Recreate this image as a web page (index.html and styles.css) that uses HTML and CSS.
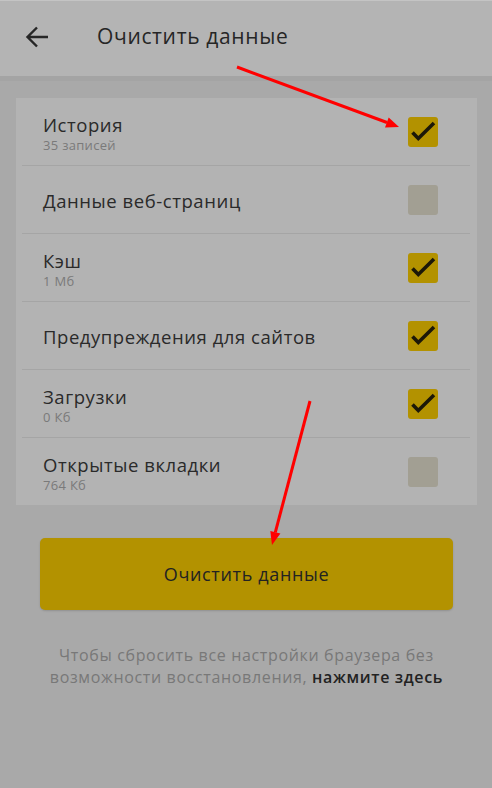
FILE: index.html
```
<!DOCTYPE html>
<html lang="ru">
<head>
<meta charset="utf-8">
<title>Очистить данные</title>
<link rel="stylesheet" href="styles.css">
</head>
<body>
<header class="topbar">
  <svg class="back" width="24" height="22" viewBox="0 0 24 22"><path d="M3 11H23M12 1.5L2.5 11L12 20.5" fill="none" stroke="#262626" stroke-width="2.4" stroke-linecap="butt" stroke-linejoin="miter"/></svg>
  <h1 class="title">Очистить данные</h1>
</header>
<main class="content">
  <section class="card">
    <div class="row">
      <div class="texts"><div class="label">История</div><div class="sub">35 записей</div></div>
      <span class="box on"><svg viewBox="0 0 30 30" width="30" height="30"><path d="M4.5 15.5L10.3 21.5L26 6" fill="none" stroke="#1c1808" stroke-width="3.6"/></svg></span>
    </div>
    <div class="row">
      <div class="texts"><div class="label">Данные веб-страниц</div></div>
      <span class="box"></span>
    </div>
    <div class="row">
      <div class="texts"><div class="label">Кэш</div><div class="sub">1 Мб</div></div>
      <span class="box on"><svg viewBox="0 0 30 30" width="30" height="30"><path d="M4.5 15.5L10.3 21.5L26 6" fill="none" stroke="#1c1808" stroke-width="3.6"/></svg></span>
    </div>
    <div class="row">
      <div class="texts"><div class="label">Предупреждения для сайтов</div></div>
      <span class="box on"><svg viewBox="0 0 30 30" width="30" height="30"><path d="M4.5 15.5L10.3 21.5L26 6" fill="none" stroke="#1c1808" stroke-width="3.6"/></svg></span>
    </div>
    <div class="row">
      <div class="texts"><div class="label">Загрузки</div><div class="sub">0 Кб</div></div>
      <span class="box on"><svg viewBox="0 0 30 30" width="30" height="30"><path d="M4.5 15.5L10.3 21.5L26 6" fill="none" stroke="#1c1808" stroke-width="3.6"/></svg></span>
    </div>
    <div class="row">
      <div class="texts"><div class="label">Открытые вкладки</div><div class="sub">764 Кб</div></div>
      <span class="box"></span>
    </div>
  </section>
  <button class="clear">Очистить данные</button>
  <p class="note">Чтобы сбросить все настройки браузера без возможности восстановления, <b>нажмите здесь</b></p>
</main>
<svg class="annot" width="492" height="788" viewBox="0 0 492 788">
  <line x1="237" y1="67" x2="387" y2="122.5" stroke="#ff0000" stroke-width="3"/>
  <polygon points="399,127 385,127.4 388.7,117.6" fill="#ff0000"/>
  <line x1="310" y1="401" x2="275.3" y2="532.4" stroke="#ff0000" stroke-width="3"/>
  <polygon points="272,545 280.4,533.6 270.3,531" fill="#ff0000"/>
</svg>
</body>
</html>
```
FILE: styles.css
```
html, body {
  margin: 0;
  padding: 0;
}
body {
  background: #a9a9a9;
  font-family: "Open Sans", "Noto Sans", sans-serif;
  color: #2a2a2a;
  width: 492px;
  height: 788px;
  overflow: hidden;
}
.topbar {
  background: #b4b4b4;
  border-top: 1px solid #c4c4c4;
  border-bottom: 5px solid #a4a4a4;
  display: flex;
  align-items: center;
  box-sizing: border-box;
  height: 81px;
  padding-left: 25px;
  padding-bottom: 5px;
}
.back {
  display: block;
  margin-top: 1px;
}
.title {
  margin: 0 0 0 48px;
  font-size: 21px;
  font-weight: 400;
  letter-spacing: 0.65px;
  color: #262626;
}
.content {
  padding: 17px 15px 0 16px;
}
.card {
  background: #b3b3b3;
}
.row {
  height: 67px;
  display: flex;
  align-items: center;
  justify-content: space-between;
  padding: 0 39px 0 27px;
  position: relative;
}
.row + .row {
  border-top: 1px solid transparent;
}
.row + .row::before {
  content: "";
  position: absolute;
  top: -1px;
  left: 6px;
  right: 7px;
  height: 1px;
  background: #a5a5a5;
}
.texts {
  padding-top: 2px;
}
.label {
  font-size: 18.5px;
  line-height: 25px;
  letter-spacing: 0.55px;
  color: #2a2a2a;
}
.sub {
  font-size: 13px;
  line-height: 17px;
  letter-spacing: 0.3px;
  color: #7a7a7a;
}
.box {
  width: 30px;
  height: 30px;
  border-radius: 3px;
  background: #a29f93;
  display: block;
}
.box.on {
  background: #b39200;
}
.box svg {
  display: block;
}
.clear {
  display: block;
  margin: 33px 24px 0 24px;
  width: calc(100% - 48px);
  height: 72px;
  border: 0;
  border-radius: 5px;
  background: #b39200;
  box-shadow: 0 1px 2px rgba(0,0,0,0.15);
  font-family: "Open Sans", "Noto Sans", sans-serif;
  font-size: 18px;
  letter-spacing: 0.65px;
  color: #222;
}
.note {
  margin: 34px 10px 0 10px;
  text-align: center;
  font-size: 16px;
  line-height: 22px;
  letter-spacing: 0.65px;
  color: #787878;
}
.note b {
  font-weight: 600;
  color: #222;
}
.annot {
  position: absolute;
  left: 0;
  top: 0;
  pointer-events: none;
}
```
